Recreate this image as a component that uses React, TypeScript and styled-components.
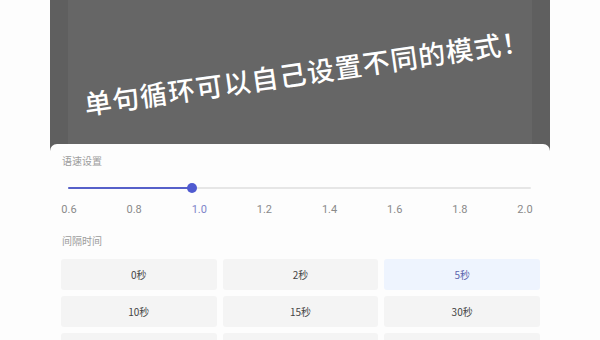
import React from "react";
import styled, { createGlobalStyle } from "styled-components";

const Global = createGlobalStyle`
  html, body { margin: 0; padding: 0; background: #fdfdfd; }
  body { font-family: "Noto Sans CJK SC", "Noto Sans", sans-serif; width: 600px; height: 340px; overflow: hidden; }
`;

const Page = styled.div`
  width: 600px;
  height: 340px;
  display: flex;
  flex-direction: column;
  align-items: center;
  overflow: hidden;
`;

const Video = styled.div`
  width: 500px;
  height: 152px;
  display: flex;
  flex-shrink: 0;
`;

const EdgeStrip = styled.div`
  width: 27px;
  background: #5f5f5f;
`;

const Canvas = styled.div`
  flex: 1;
  background: #666666;
  display: flex;
  align-items: center;
  justify-content: center;
  padding: 0 0 10px 14px;
  box-sizing: border-box;
`;

const Caption = styled.div`
  color: #ffffff;
  font-size: 27px;
  font-weight: 500;
  white-space: nowrap;
  letter-spacing: 1.1px;
  transform: rotate(-8.2deg);
`;

const Sheet = styled.div`
  width: 500px;
  margin-top: -8px;
  background: #fdfdfd;
  border-radius: 7px 7px 0 0;
  padding: 10px 10px 0 11px;
  box-sizing: border-box;
  flex: 1;
`;

const SectionLabel = styled.div`
  font-size: 10px;
  line-height: 14px;
  color: #9c9c9c;
  padding-left: 1px;
`;

const SliderWrap = styled.div`
  position: relative;
  height: 10px;
  margin: 15px 9px 0 7px;
`;

const Track = styled.div`
  position: absolute;
  left: 0;
  right: 0;
  top: 4px;
  height: 2px;
  background: #e6e6e6;
  border-radius: 1px;
`;

const Fill = styled.div`
  position: absolute;
  left: 0;
  top: 4px;
  height: 2px;
  background: #5660c9;
  border-radius: 1px;
`;

const Thumb = styled.div`
  position: absolute;
  top: 0;
  width: 10px;
  height: 10px;
  margin-left: -5px;
  border-radius: 50%;
  background: #4f5ad0;
`;

const Ticks = styled.div`
  display: flex;
  justify-content: space-between;
  margin: 10px 6px 0 -1px;
`;

const Tick = styled.span<{ $active?: boolean }>`
  width: 18px;
  text-align: center;
  font-family: "Roboto", "Noto Sans", sans-serif;
  font-size: 11px;
  line-height: 14px;
  color: ${(p) => (p.$active ? "#7d84c9" : "#8a8a8a")};
`;

const IntervalLabel = styled(SectionLabel)`
  margin-top: 17px;
`;

const Grid = styled.div`
  display: grid;
  grid-template-columns: repeat(3, 1fr);
  gap: 6px;
  margin-top: 11px;
`;

const Option = styled.div<{ $selected?: boolean }>`
  height: 31px;
  border-radius: 3px;
  display: flex;
  align-items: center;
  justify-content: center;
  font-size: 10px;
  color: ${(p) => (p.$selected ? "#5a63ad" : "#444444")};
  background: ${(p) => (p.$selected ? "#eef4fe" : "#f4f4f4")};
`;

const ticks = ["0.6", "0.8", "1.0", "1.2", "1.4", "1.6", "1.8", "2.0"];
const options = ["0秒", "2秒", "5秒", "10秒", "15秒", "30秒"];

export default function App() {
  const pct = 26.8;
  return (
    <Page>
      <Global />
      <Video>
        <EdgeStrip />
        <Canvas>
          <Caption>单句循环可以自己设置不同的模式！</Caption>
        </Canvas>
        <EdgeStrip />
      </Video>
      <Sheet>
        <SectionLabel>语速设置</SectionLabel>
        <SliderWrap>
          <Track />
          <Fill style={{ width: `${pct}%` }} />
          <Thumb style={{ left: `${pct}%` }} />
        </SliderWrap>
        <Ticks>
          {ticks.map((t) => (
            <Tick key={t} $active={t === "1.0"}>
              {t}
            </Tick>
          ))}
        </Ticks>
        <IntervalLabel>间隔时间</IntervalLabel>
        <Grid>
          {options.map((o) => (
            <Option key={o} $selected={o === "5秒"}>
              {o}
            </Option>
          ))}
          <Option />
          <Option />
          <Option />
        </Grid>
      </Sheet>
    </Page>
  );
}
